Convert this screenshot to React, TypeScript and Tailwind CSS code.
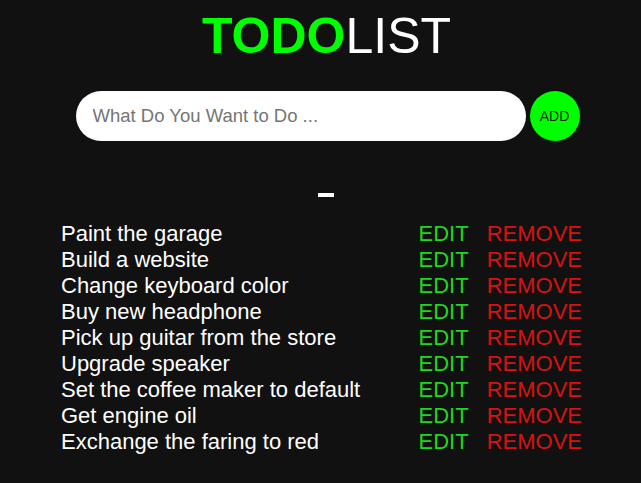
import React from "react";

const items = [
  "Paint the garage",
  "Build a website",
  "Change keyboard color",
  "Buy new headphone",
  "Pick up guitar from the store",
  "Upgrade speaker",
  "Set the coffee maker to default",
  "Get engine oil",
  "Exchange the faring to red",
];

export default function App() {
  return (
    <div className="min-h-[483px] w-full bg-[#111111] font-['Liberation_Sans',Arial,sans-serif] text-white">
      <div className="flex flex-col items-center pt-[8px]">
        <h1 className="ml-[12px] text-[50px] leading-[57px]">
          <span className="font-bold text-[#00ff00]">TODO</span>
          <span className="font-normal text-white">LIST</span>
        </h1>
        <div className="ml-[14px] mt-[26px] flex items-center gap-[4px]">
          <input
            className="h-[50px] w-[450px] rounded-full bg-white pl-[17px] text-[18.5px] text-[#333] placeholder:text-[#757575] outline-none"
            placeholder="What Do You Want to Do ..."
          />
          <button className="flex h-[50px] w-[50px] items-center justify-center rounded-full bg-[#00ff00] text-[14px] text-[#222]">
            ADD
          </button>
        </div>
        <div className="ml-[11px] mt-[52px] h-[4px] w-[16px] bg-white" />
        <ul className="ml-[2px] mt-[24px] w-[521px] pl-0">
          {items.map((t) => (
            <li key={t} className="flex h-[26px] items-center text-[22px] leading-[26px]">
              <span className="flex-1 text-white">{t}</span>
              <span className="text-[#1ed71e]">EDIT</span>
              <span className="ml-[18px] text-[#d81212]">REMOVE</span>
            </li>
          ))}
        </ul>
      </div>
    </div>
  );
}
